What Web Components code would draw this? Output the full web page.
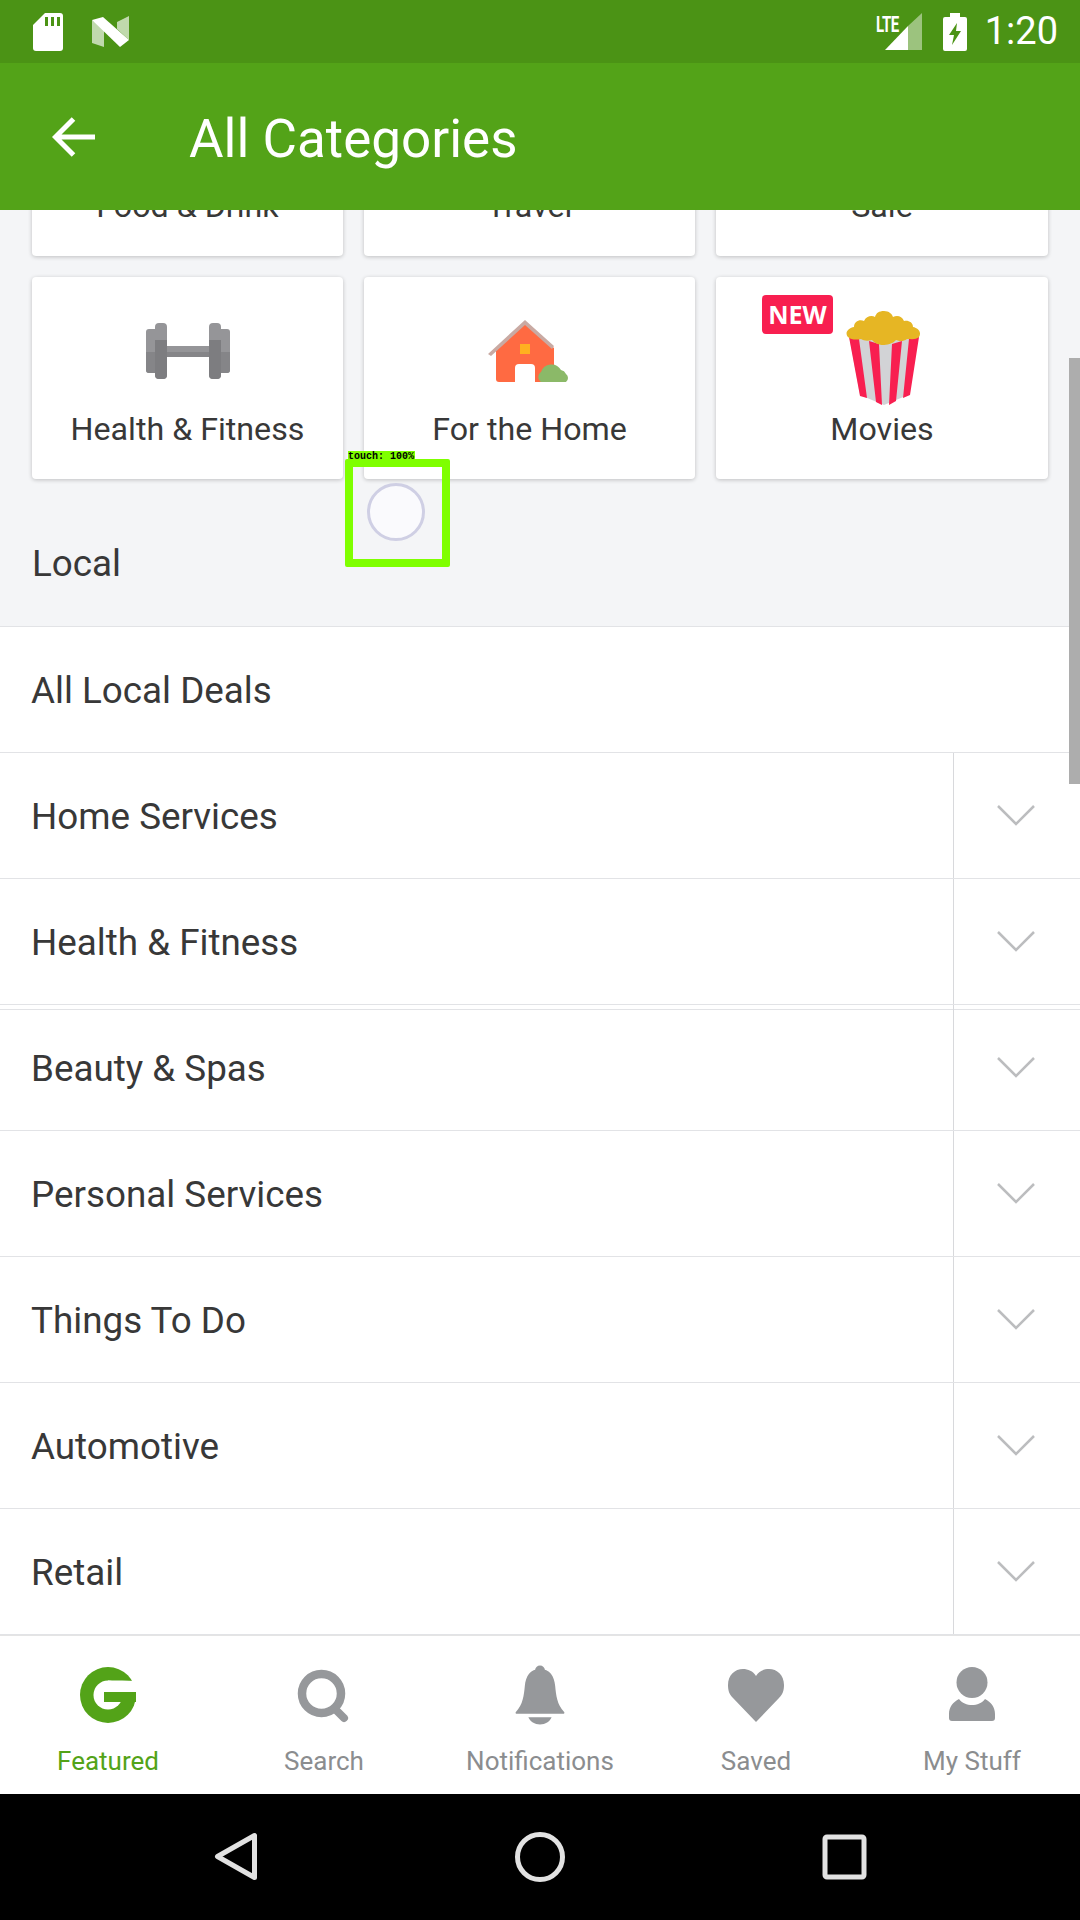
<!DOCTYPE html>
<html>
<head>
<meta charset="utf-8">
<title>All Categories</title>
<style>
  html, body { margin: 0; padding: 0; }
  body { width: 1080px; height: 1920px; overflow: hidden; font-family: Roboto, "Liberation Sans", sans-serif; }
</style>
</head>
<body>
<app-screen>
  <status-bar></status-bar>
  <app-bar title="All Categories"></app-bar>
  <scroll-area>
    <category-grid>
      <category-card label="Food &amp; Drink"></category-card>
      <category-card label="Travel"></category-card>
      <category-card label="Sale"></category-card>
      <category-card label="Health &amp; Fitness">
        <svg slot="icon" width="84" height="58" viewBox="0 0 84 56" style="margin-top:2px">
          <rect x="0" y="6" width="12" height="44" rx="3" fill="#959598"/>
          <rect x="72" y="6" width="12" height="44" rx="3" fill="#959598"/>
          <rect x="9" y="0" width="12" height="56" rx="4" fill="#959598"/>
          <rect x="63" y="0" width="12" height="56" rx="4" fill="#959598"/>
          <rect x="21" y="23" width="42" height="11" fill="#959598"/>
          <rect x="21" y="29" width="42" height="5" fill="#858588"/>
          <path d="M9 17h12v35a4 4 0 0 1-4 4h-4a4 4 0 0 1-4-4zM63 17h12v35a4 4 0 0 1-4 4h-4a4 4 0 0 1-4-4z" fill="#7d7d80"/>
          <path d="M0 29h9v21H3a3 3 0 0 1-3-3zM75 29h9v18a3 3 0 0 1-3 3h-6z" fill="#858588"/>
        </svg>
      </category-card>
      <category-card label="For the Home">
        <svg slot="icon" width="84" height="62" viewBox="0 0 84 62">
          <path d="M8 28 37 4l29 24v31a3 3 0 0 1-3 3H11a3 3 0 0 1-3-3z" fill="#ff6a42"/>
          <path d="M0 34 37 0l29 26-2 3L37 5 3 36z" fill="#c9aaa3"/>
          <rect x="32" y="24" width="10" height="10" fill="#ffb020"/>
          <path d="M27 62V48a4 4 0 0 1 4-4h12a4 4 0 0 1 4 4v14z" fill="#fff"/>
          <path d="M53 62a6 6 0 0 1 0-10 11 11 0 0 1 20-2 7 7 0 0 1 5 4 5 5 0 0 1 0 8z" fill="#8bb968"/>
        </svg>
      </category-card>
      <category-card label="Movies">
        <new-badge slot="badge">NEW</new-badge>
        <svg slot="icon" width="76" height="94" viewBox="0 0 76 94" style="margin:-9px 0 0 4px">
          <path d="M3 24h70L62 84 38 94 14 84z" fill="#d2d3d6"/>
          <path d="M3 26l10 2 8 59-7-2zM23 30l10 3 3 61-6-3zM46 33l10-3-6 60-7 4zM63 28l10-2-9 58-7 3z" fill="#f81f50"/>
          <path d="M2 26c-4-5 1-9 6-10 0-6 6-8 10-6 2-5 8-6 11-4 1-4 4-6 9-6s8 3 9 6c4-2 9-1 11 4 4-1 9 1 9 6 5 1 9 5 6 10-3 3-8 2-12 2-4 3-8 2-11 1-3 4-10 5-13 5s-9-2-11-5c-4 1-8 1-11-1-4 1-10 1-13-2z" fill="#e6b624"/>
        </svg>
      </category-card>
    </category-grid>
    <section-title>Local</section-title>
    <category-list>
      <list-row label="All Local Deals" plain></list-row>
      <list-row label="Home Services"></list-row>
      <list-row label="Health &amp; Fitness"></list-row>
      <list-row label="Beauty &amp; Spas" seam></list-row>
      <list-row label="Personal Services"></list-row>
      <list-row label="Things To Do"></list-row>
      <list-row label="Automotive"></list-row>
      <list-row label="Retail"></list-row>
    </category-list>
    <scroll-thumb></scroll-thumb>
    <touch-marker></touch-marker>
  </scroll-area>
  <tab-bar>
    <tab-item label="Featured" active>
      <svg width="56" height="56" viewBox="0 0 56 56">
        <circle cx="28" cy="28" r="28" fill="#53a318"/>
        <circle cx="28" cy="28" r="14.500" fill="#fff"/>
        <path d="M28 13.500c10 0 18 0 28 .5v11H28z" fill="#fff"/>
        <rect x="24" y="25" width="32" height="10" fill="#53a318"/>
      </svg>
    </tab-item>
    <tab-item label="Search">
      <svg width="56" height="56" viewBox="0 0 56 56">
        <circle cx="25.500" cy="26.500" r="19.500" fill="none" stroke="#96989b" stroke-width="8.500"/>
        <path d="M39 42l9 9" stroke="#96989b" stroke-width="8" stroke-linecap="round"/>
      </svg>
    </tab-item>
    <tab-item label="Notifications">
      <svg width="50" height="62" viewBox="0 0 56 66" style="margin-top:-3px">
        <circle cx="28" cy="5.500" r="5.500" fill="#96989b"/>
        <path d="M28 4c11 0 16 8 17 19 1 10 2 21 10 29 1 1 0 2-1 2H2c-1 0-2-1-1-2 8-8 9-19 10-29C12 12 17 4 28 4z" fill="#96989b"/>
        <path d="M15 58h26c-2 5-7 8-13 8s-11-3-13-8z" fill="#96989b"/>
      </svg>
    </tab-item>
    <tab-item label="Saved">
      <svg width="56" height="56" viewBox="0 0 56 56">
        <path d="M28 55 5 31C1 27 0 23 0 18 0 8 7 2 15 2c5 0 10 2 13 7 3-5 8-7 13-7 8 0 15 6 15 16 0 5-1 9-5 13z" fill="#96989b"/>
      </svg>
    </tab-item>
    <tab-item label="My Stuff">
      <svg width="46" height="54" viewBox="0 0 46 54">
        <circle cx="23" cy="15.500" r="15.500" fill="#96989b"/>
        <path d="M10 32c3 4 8 6 13 6s10-2 13-6c6 3 10 8 10 15v4c0 2-1 3-3 3H3c-2 0-3-1-3-3v-4c0-7 4-12 10-15z" fill="#96989b"/>
      </svg>
    </tab-item>
  </tab-bar>
  <nav-bar></nav-bar>
</app-screen>

<script>
// Small helper so every element below sets up its shadow root the same way
class ShadowElement extends HTMLElement {
  constructor() {
    super();
    this.attachShadow({ mode: 'open' });
  }
  connectedCallback() {
    this.shadowRoot.innerHTML = this.render();
  }
}

class AppScreen extends ShadowElement {
  render() {
    return `<style>
      :host { display: flex; flex-direction: column; width: 1080px; height: 1920px; background: #f4f5f7; color: #333; }
    </style><slot></slot>`;
  }
}

class StatusBar extends ShadowElement {
  render() {
    return `<style>
      :host { display: flex; align-items: center; height: 63px; flex: none; background: #4b9315; color: #fff; padding: 0 22px 0 33px; box-sizing: border-box; }
      .left { display: flex; align-items: center; gap: 29px; flex: 1; }
      .right { display: flex; align-items: center; }
      .time { font: 400 38px/65px Roboto, sans-serif; margin-left: 18px; }
      .lte { font: 700 15px/15px Roboto, sans-serif; position: absolute; left: 876px; top: 14px; transform: scaleY(1.5); transform-origin: top left; letter-spacing: -.5px; }
      svg { display: block; }
    </style>
    <div class="left">
      <svg width="30" height="38" viewBox="0 0 30 38"><path fill="#fff" d="M12 0h15a3 3 0 0 1 3 3v32a3 3 0 0 1-3 3H3a3 3 0 0 1-3-3V12z"/><path fill="#4b9315" d="M13 4h3v9h-3zM19 4h3v9h-3zM25 4h3v9h-3z" transform="translate(-1 0)"/></svg>
      <svg width="37" height="31" viewBox="0 0 37 31"><path fill="#fff" opacity=".65" d="M0 4l12 8v19L0 27zM25 6l12-6v24L25 13z"/><path fill="#fff" d="M0 4 11 1l26 23-9 7z"/></svg>
    </div>
    <div class="right">
      <span class="lte">LTE</span>
      <svg width="37" height="37" viewBox="0 0 37 37"><path fill="#fff" opacity=".45" d="M37 0v37H23V13z"/><path fill="#fff" d="M23 13v24H0z"/></svg>
      <svg width="24" height="38" viewBox="0 0 24 38" style="margin-left:21px"><path fill="#fff" fill-rule="evenodd" d="M7 0h10v4h5a2 2 0 0 1 2 2v30a2 2 0 0 1-2 2H2a2 2 0 0 1-2-2V6a2 2 0 0 1 2-2h5zM14 10 6 22h5l-2 10 9-14h-5z"/></svg>
      <span class="time">1:20</span>
    </div>`;
  }
}

class AppBar extends ShadowElement {
  render() {
    return `<style>
      :host { display: flex; align-items: center; height: 147px; flex: none; background: #53a318; color: #fff; position: relative; z-index: 2; }
      svg { margin-left: 52px; display: block; }
      h1 { font: 400 53px/147px Roboto, sans-serif; margin: 5px 0 0 94px; }
    </style>
    <svg width="43" height="40" viewBox="0 0 43 40" fill="none" stroke="#fff" stroke-width="5"><path d="M43 20H4M21.500 2 3.500 20l18 18"/></svg>
    <h1>${this.getAttribute('title')}</h1>`;
  }
}

class ScrollArea extends ShadowElement {
  render() {
    return `<style>
      :host { display: block; flex: 1; min-height: 0; overflow: hidden; position: relative; }
      .inner { margin-top: -156px; }
    </style><div class="inner"><slot></slot></div>`;
  }
}

class CategoryGrid extends ShadowElement {
  render() {
    return `<style>
      :host { display: grid; grid-template-columns: 311px 331px 332px; gap: 21px; padding-left: 32px; }
    </style><slot></slot>`;
  }
}

class CategoryCard extends ShadowElement {
  render() {
    return `<style>
      :host { display: flex; flex-direction: column; align-items: center; height: 202px; box-sizing: border-box; padding-top: 43px; background: #fff; border-radius: 4px; box-shadow: 0 1px 4px rgba(0,0,0,.22); position: relative; }
      .icon { display: flex; align-items: flex-start; justify-content: center; height: 85px; }
      .label { font: 400 32.200px/48px Roboto, sans-serif; color: #383838; }
    </style>
    <slot name="badge"></slot>
    <div class="icon"><slot name="icon"></slot></div>
    <div class="label">${this.getAttribute('label').replace(/&/g, '&amp;')}</div>`;
  }
}

class NewBadge extends ShadowElement {
  render() {
    return `<style>
      :host { position: absolute; left: 46px; top: 18px; width: 71px; height: 39px; display: flex; align-items: center; justify-content: center; background: #f81f50; border-radius: 4px; color: #fff; font: 700 25px/39px "Open Sans", sans-serif; }
    </style><slot></slot>`;
  }
}

class SectionTitle extends ShadowElement {
  render() {
    return `<style>
      :host { display: flex; align-items: flex-end; height: 147px; box-sizing: border-box; padding: 0 0 38px 32px; font: 400 36.800px/48px Roboto, sans-serif; color: #383838; }
    </style><slot></slot>`;
  }
}

class CategoryList extends ShadowElement {
  render() {
    return `<style>
      :host { display: block; border-top: 1px solid #e2e3e6; background: #fff; }
    </style><slot></slot>`;
  }
}

class ListRow extends ShadowElement {
  render() {
    const label = this.getAttribute('label').replace(/&/g, '&amp;');
    const cell = this.hasAttribute('plain') ? '' : `<div class="more">
      <svg width="38" height="22" viewBox="0 0 38 22" fill="none" stroke="#bcbdbf" stroke-width="2.500"><path d="M1 1l18 18L37 1"/></svg>
    </div>`;
    return `<style>
      :host { display: flex; height: 126px; box-sizing: border-box; border-bottom: 1px solid #e2e3e6; background: #fff; }
      :host([seam]) { background: linear-gradient(#e2e3e6, #e2e3e6) 0 4px / 100% 1px no-repeat #fff; }
      .label { flex: 1; padding-left: 31px; font: 400 36.800px/127px Roboto, sans-serif; color: #383838; }
      .more { flex: none; width: 126px; border-left: 1px solid #d8d9dc; display: flex; align-items: center; justify-content: center; }
      svg { display: block; margin-left: -2px; }
    </style><div class="label">${label}</div>${cell}`;
  }
}

class ScrollThumb extends ShadowElement {
  render() {
    return `<style>
      :host { position: absolute; right: 0; top: 148px; width: 11px; height: 426px; background: #adadad; }
    </style>`;
  }
}

class TouchMarker extends ShadowElement {
  render() {
    return `<style>
      :host { position: absolute; left: 345px; top: 249px; width: 105px; height: 108px; box-sizing: border-box; border: 8px solid #7fff00; border-radius: 2px; }
      .tag { position: absolute; left: -5px; top: -16px; width: 67px; height: 12px; background: #7fff00; color: #000; font: 700 10px/12px "Liberation Mono", monospace; white-space: nowrap; }
      .dot { position: absolute; left: 14px; top: 16px; width: 58px; height: 58px; box-sizing: border-box; border: 3px solid #cfcfe4; border-radius: 50%; background: #fafafd; }
    </style><div class="tag">touch: 100%</div><div class="dot"></div>`;
  }
}

class TabBar extends ShadowElement {
  render() {
    return `<style>
      :host { display: grid; grid-template-columns: repeat(5, 216px); height: 159px; flex: none; background: #fff; border-top: 1px solid #e4e4e4; box-sizing: border-box; }
    </style><slot></slot>`;
  }
}

class TabItem extends ShadowElement {
  render() {
    return `<style>
      :host { display: flex; flex-direction: column; align-items: center; padding-top: 31px; color: #8b8d8f; }
      :host([active]) { color: #53a318; }
      .icon { height: 58px; display: flex; align-items: flex-start; justify-content: center; }
      .label { font: 400 26px/34px Roboto, sans-serif; margin-top: 19px; }
    </style><div class="icon"><slot></slot></div><div class="label">${this.getAttribute('label')}</div>`;
  }
}

class NavBar extends ShadowElement {
  render() {
    return `<style>
      :host { display: block; height: 126px; flex: none; background: #000; }
      svg { display: block; }
    </style>
    <svg width="1080" height="126" viewBox="0 0 1080 126" fill="none" stroke="#e2e2e2" stroke-width="5" stroke-linejoin="round">
      <path d="M254.500 41.500v42l-37-21z"/>
      <circle cx="540" cy="63" r="22.500"/>
      <rect x="825" y="43" width="39" height="40" rx="2"/>
    </svg>`;
  }
}

customElements.define('app-screen', AppScreen);
customElements.define('status-bar', StatusBar);
customElements.define('app-bar', AppBar);
customElements.define('scroll-area', ScrollArea);
customElements.define('category-grid', CategoryGrid);
customElements.define('category-card', CategoryCard);
customElements.define('new-badge', NewBadge);
customElements.define('section-title', SectionTitle);
customElements.define('category-list', CategoryList);
customElements.define('list-row', ListRow);
customElements.define('scroll-thumb', ScrollThumb);
customElements.define('touch-marker', TouchMarker);
customElements.define('tab-bar', TabBar);
customElements.define('tab-item', TabItem);
customElements.define('nav-bar', NavBar);
</script>
</body>
</html>
